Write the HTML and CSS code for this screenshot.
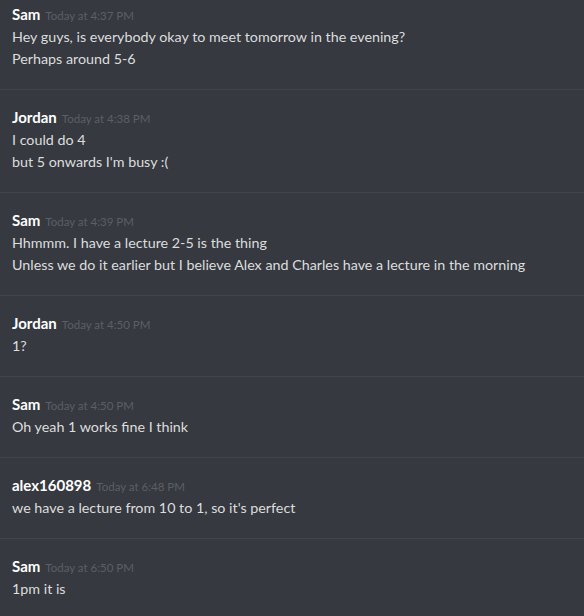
FILE: index.html
```html
<!DOCTYPE html>
<html lang="en">
<head>
<meta charset="utf-8">
<title>Chat</title>
<link rel="stylesheet" href="styles.css">
</head>
<body>
<div class="chat">
  <div class="msg">
    <div class="head"><span class="name">Sam</span><span class="time">Today at 4:37 PM</span></div>
    <div class="line">Hey guys, is everybody okay to meet tomorrow in the evening?</div>
    <div class="line">Perhaps around 5-6</div>
  </div>
  <div class="msg">
    <div class="head"><span class="name">Jordan</span><span class="time">Today at 4:38 PM</span></div>
    <div class="line">I could do 4</div>
    <div class="line">but 5 onwards I'm busy :(</div>
  </div>
  <div class="msg">
    <div class="head"><span class="name">Sam</span><span class="time">Today at 4:39 PM</span></div>
    <div class="line">Hhmmm. I have a lecture 2-5 is the thing</div>
    <div class="line">Unless we do it earlier but I believe Alex and Charles have a lecture in the morning</div>
  </div>
  <div class="msg">
    <div class="head"><span class="name">Jordan</span><span class="time">Today at 4:50 PM</span></div>
    <div class="line">1?</div>
  </div>
  <div class="msg">
    <div class="head"><span class="name">Sam</span><span class="time">Today at 4:50 PM</span></div>
    <div class="line">Oh yeah 1 works fine I think</div>
  </div>
  <div class="msg">
    <div class="head"><span class="name">alex160898</span><span class="time">Today at 6:48 PM</span></div>
    <div class="line">we have a lecture from 10 to 1, so it's perfect</div>
  </div>
  <div class="msg">
    <div class="head"><span class="name">Sam</span><span class="time">Today at 6:50 PM</span></div>
    <div class="line">1pm it is</div>
  </div>
</div>
</body>
</html>
```

FILE: styles.css
```css
html, body {
  margin: 0;
  padding: 0;
  background: #36393f;
  height: 100%;
  overflow: hidden;
}
body {
  font-family: "Lato", "Open Sans", sans-serif;
  color: #dcddde;
}
.chat {
  margin-top: -13px;
}
.msg {
  padding: 18px 12px 19px;
  border-bottom: 1px solid #41444a;
}
.head {
  display: flex;
  align-items: baseline;
  gap: 5px;
  height: 18px;
  line-height: 18px;
  margin-bottom: 3px;
}
.name {
  color: #ffffff;
  font-weight: 700;
  font-size: 15px;
}
.time {
  color: #5c5f66;
  font-size: 11.5px;
}
.line {
  font-size: 14.3px;
  line-height: 22px;
}
```
